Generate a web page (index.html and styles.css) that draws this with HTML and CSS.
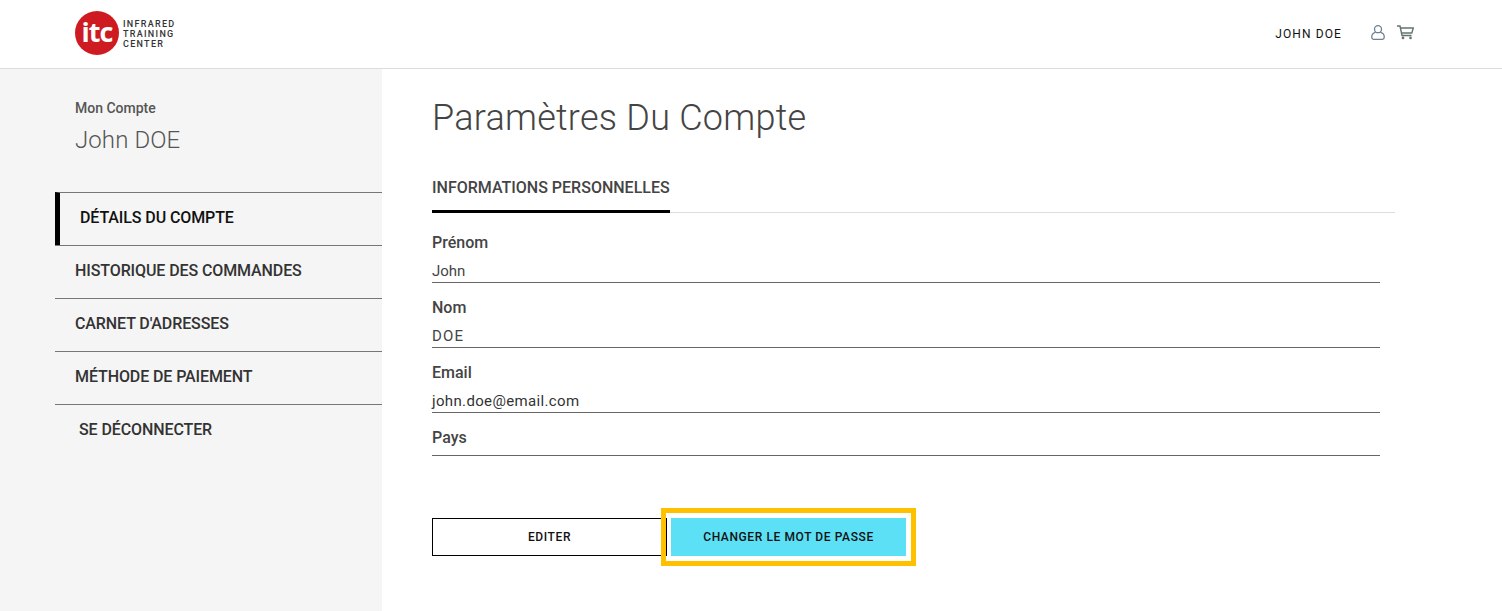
FILE: index.html
```html
<!DOCTYPE html>
<html lang="fr">
<head>
<meta charset="utf-8">
<title>Paramètres Du Compte</title>
<link rel="stylesheet" href="styles.css">
</head>
<body>
<header class="topbar">
  <a class="logo" href="#">
    <span class="logo-mark">itc</span>
    <span class="logo-text">INFRARED<br>TRAINING<br>CENTER</span>
  </a>
  <div class="user-tools">
    <span class="user-name">JOHN DOE</span>
    <svg class="icon-user" width="14" height="15" viewBox="0 0 14 15" fill="none" stroke="#6f8092" stroke-width="1.3"><circle cx="7" cy="4.2" r="3.5"/><path d="M4.6 7.2C2.4 8 .8 9.6 .8 11.6V12.6C.8 13.6 1.6 14.3 2.6 14.3H11.4C12.4 14.3 13.2 13.6 13.2 12.6V11.6C13.2 9.6 11.6 8 9.4 7.2"/></svg>
    <svg class="icon-cart" width="17" height="15" viewBox="0 0 17 15" fill="none" stroke="#64746c" stroke-width="1.4"><path d="M0 1H3L5 10.5H14.5"/><path d="M3.4 3H16.3L14.8 8H4.4"/><circle cx="6" cy="12.9" r="1.3" fill="#64746c" stroke="none"/><circle cx="13.5" cy="12.9" r="1.3" fill="#64746c" stroke="none"/></svg>
  </div>
</header>
<div class="page">
  <aside class="sidebar">
    <div class="account">
      <div class="account-label">Mon Compte</div>
      <div class="account-name">John DOE</div>
    </div>
    <nav class="side-nav">
      <a class="nav-item active" href="#">DÉTAILS DU COMPTE</a>
      <a class="nav-item" href="#">HISTORIQUE DES COMMANDES</a>
      <a class="nav-item" href="#">CARNET D'ADRESSES</a>
      <a class="nav-item" href="#">MÉTHODE DE PAIEMENT</a>
      <a class="nav-item logout" href="#">SE DÉCONNECTER</a>
    </nav>
  </aside>
  <main class="content">
    <h1 class="title">Paramètres Du Compte</h1>
    <div class="tabs"><span class="tab">INFORMATIONS PERSONNELLES</span></div>
    <div class="form">
      <div class="field"><div class="field-label">Prénom</div><div class="field-value">John</div></div>
      <div class="field"><div class="field-label">Nom</div><div class="field-value wide">DOE</div></div>
      <div class="field"><div class="field-label">Email</div><div class="field-value email">john.doe@email.com</div></div>
      <div class="field field-empty"><div class="field-label">Pays</div><div class="field-value"></div></div>
    </div>
    <div class="actions">
      <button class="btn btn-outline">EDITER</button>
      <button class="btn btn-primary">CHANGER LE MOT DE PASSE</button>
    </div>
  </main>
</div>
</body>
</html>
```
FILE: styles.css
```css
* { box-sizing: border-box; }
html, body { margin: 0; height: 100%; }
body {
  font-family: Roboto, "Liberation Sans", sans-serif;
  color: #333;
  background: #fff;
  overflow: hidden;
}
a { color: inherit; text-decoration: none; }

.topbar {
  height: 69px;
  border-bottom: 1px solid #dcdcdc;
  display: flex;
  align-items: center;
  justify-content: space-between;
  padding: 0 88px 2px 75px;
}
.logo { display: flex; align-items: center; gap: 4px; }
.logo-mark {
  width: 44px; height: 44px;
  border-radius: 50%;
  background: #ce1b22;
  color: #fff;
  font: 700 27px/41px "Open Sans", sans-serif;
  letter-spacing: -1px;
  text-align: center;
}
.logo-text {
  font: 500 9px/10px Roboto, sans-serif;
  letter-spacing: 1.3px;
  color: #333;
  padding-top: 2px;
}
.user-tools { display: flex; align-items: center; }
.user-name { font-size: 12px; letter-spacing: 1.1px; color: #111; margin: 2px 29px 0 0; }
.icon-user { margin: 0 12px 1px 0; }
.icon-cart { margin-bottom: 1px; }

.page { display: flex; height: 542px; }
.sidebar {
  width: 382px;
  flex: none;
  background: #f5f5f5;
  padding: 31px 0 0 55px;
}
.account { padding-left: 20px; height: 92px; }
.account-label { font-size: 14px; line-height: 16px; font-weight: 500; color: #555; }
.account-name { font-size: 24px; line-height: 28px; margin-top: 10px; font-weight: 300; color: #555; letter-spacing: 0.1px; }
.side-nav { display: flex; flex-direction: column; }
.nav-item {
  height: 53px;
  border-top: 1px solid #777;
  padding: 15px 0 0 20px;
  font-size: 16px;
  line-height: 20px;
  font-weight: 500;
  color: #333;
  letter-spacing: -0.1px;
}
.nav-item.active { border-left: 5px solid #000; color: #111; }
.logout { padding-left: 24px; }

.content { flex: 1; padding: 27px 107px 0 50px; }
.title {
  margin: 0;
  font-size: 36px;
  line-height: 44px;
  font-weight: 300;
  color: #444;
  letter-spacing: 0.25px;
}
.tabs { margin-top: 33px; height: 40px; border-bottom: 1px solid #ddd; }
.tab {
  display: inline-block;
  height: 40px;
  padding-top: 5px;
  line-height: 20px;
  font-size: 16px;
  font-weight: 500;
  color: #444;
  border-bottom: 3px solid #000;
}
.form { width: 948px; margin-top: 20px; }
.field { height: 65px; }
.field-empty { height: 49px; }
.field-label { font-size: 16px; line-height: 20px; font-weight: 500; color: #444; }
.field-value {
  height: 31px;
  padding-top: 9px;
  font-size: 15px;
  line-height: 20px;
  color: #444;
  border-bottom: 1px solid #666;
  margin-top: -1px;
}
.field-empty .field-value { height: 9px; padding-top: 0; }
.email { letter-spacing: 0.35px; color: #333; }
.wide { letter-spacing: 1.2px; }
.actions { display: flex; gap: 4px; margin-top: 41px; }
.btn {
  width: 235px;
  height: 38px;
  font: 500 12px Roboto, sans-serif;
  letter-spacing: 0.6px;
  color: #111;
  border-radius: 0;
  cursor: pointer;
}
.btn-outline { background: #fff; border: 1px solid #000; }
.btn-primary {
  background: #5ce0f5;
  border: 0;
  outline: 5px solid #ffc000;
  outline-offset: 5px;
}
```
